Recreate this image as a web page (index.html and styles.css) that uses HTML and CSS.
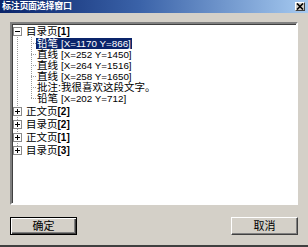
FILE: index.html
```html
<!DOCTYPE html>
<html lang="zh-CN">
<head>
    <meta charset="UTF-8">
    <meta name="viewport" content="width=device-width, initial-scale=1.0">
    <title>标注页面选择窗口</title>
    <link rel="stylesheet" href="styles.css">
</head>
<body>
    <div class="window">
        <div class="titlebar">
            <span class="title">标注页面选择窗口</span>
            <span class="close">
                <svg width="8" height="7" viewBox="0 0 8 7"><path d="M1 0.5 L7 6.5 M7 0.5 L1 6.5" stroke="#000" stroke-width="1.6"/></svg>
            </span>
        </div>

        <div class="panel">
            <div class="tree">
                <div class="node first">
                    <span class="expander minus"></span>
                    <span class="label">目录页<b>[1]</b></span>
                </div>
                <div class="children">
                    <div class="leaf"><span class="label selected">铅笔 <span class="coord">[X=1170 Y=866]</span></span></div>
                    <div class="leaf"><span class="label">直线 <span class="coord">[X=252 Y=1450]</span></span></div>
                    <div class="leaf"><span class="label">直线 <span class="coord">[X=264 Y=1516]</span></span></div>
                    <div class="leaf"><span class="label">直线 <span class="coord">[X=258 Y=1650]</span></span></div>
                    <div class="leaf"><span class="label">批注:我很喜欢这段文字。</span></div>
                    <div class="leaf last"><span class="label">铅笔 <span class="coord">[X=202 Y=712]</span></span></div>
                </div>
                <div class="node">
                    <span class="expander plus"></span>
                    <span class="label">正文页<b>[2]</b></span>
                </div>
                <div class="node">
                    <span class="expander plus"></span>
                    <span class="label">目录页<b>[2]</b></span>
                </div>
                <div class="node">
                    <span class="expander plus"></span>
                    <span class="label">正文页<b>[1]</b></span>
                </div>
                <div class="node">
                    <span class="expander plus"></span>
                    <span class="label">目录页<b>[3]</b></span>
                </div>
            </div>
        </div>

        <div class="buttons">
            <button class="btn default">确定</button>
            <button class="btn">取消</button>
        </div>
    </div>
</body>
</html>
```

FILE: styles.css
```css
html, body {
    margin: 0;
    padding: 0;
}
body {
    background-color: #d4d0c8;
    font-family: "Liberation Sans", "Noto Sans CJK SC", sans-serif;
    font-size: 11px;
    color: #000;
}
.window {
    height: 245px;
    border-bottom: 2px solid #404040;
    box-sizing: content-box;
}
.titlebar {
    height: 13px;
    display: flex;
    align-items: center;
    justify-content: space-between;
    padding: 0 3px 0 2px;
    background: linear-gradient(to right, #0a246a 0%, #3a62a8 45%, #a6caf0 100%);
}
.title {
    color: #fff;
    font-family: "Liberation Sans", "Noto Sans CJK SC", sans-serif;
    font-size: 9px;
    font-weight: bold;
    line-height: 13px;
    letter-spacing: -0.3px;
}
.close {
    width: 10px;
    height: 9px;
    display: flex;
    align-items: center;
    justify-content: center;
    background-color: #d4d0c8;
    border: 1px solid;
    border-color: #fff #404040 #404040 #fff;
    box-sizing: border-box;
}
.panel {
    margin: 9px 10px 0 10px;
    height: 183px;
    background-color: #fff;
    border: 2px solid;
    border-color: #808080 #fff #fff #808080;
    box-sizing: border-box;
    box-shadow: inset 1px 1px 0 #404040;
    padding-top: 1px;
}
.tree {
    background-image: repeating-linear-gradient(to bottom, #9a9a9a 0 1px, transparent 1px 2px);
    background-repeat: no-repeat;
    background-size: 1px calc(100% - 12px);
    background-position: 5px 6px;
}
.node {
    display: flex;
    align-items: center;
    height: 13px;
    padding-left: 1px;
}
.node.first {
    height: 12px;
}
.expander {
    width: 9px;
    height: 9px;
    flex: none;
    box-sizing: border-box;
    border: 1px solid #8a8a8a;
    background-color: #fff;
    margin-right: 4px;
    background-repeat: no-repeat;
    background-image: linear-gradient(#000, #000);
    background-size: 5px 1px;
    background-position: 1px 3px;
}
.expander.plus {
    background-image: linear-gradient(#000, #000), linear-gradient(#000, #000);
    background-size: 5px 1px, 1px 5px;
    background-position: 1px 3px, 3px 1px;
}
.label {
    font-family: "Liberation Sans", "Noto Sans CJK SC", sans-serif;
    font-size: 10.5px;
    line-height: 11px;
    white-space: nowrap;
}
.label b {
    font-size: 10px;
    font-weight: bold;
}
.coord {
    font-size: 9.8px;
}
.children {
    margin-left: 19px;
    padding-top: 1px;
    background-image: repeating-linear-gradient(to bottom, #9a9a9a 0 1px, transparent 1px 2px);
    background-repeat: no-repeat;
    background-size: 1px calc(100% - 6px);
    background-position: 0 0;
}
.leaf {
    display: flex;
    align-items: center;
    height: 11px;
    padding-left: 6px;
    background-image: repeating-linear-gradient(to right, #9a9a9a 0 1px, transparent 1px 2px);
    background-repeat: no-repeat;
    background-size: 5px 1px;
    background-position: 0 5px;
}
.leaf.last {
    margin-bottom: 1px;
}
.label.selected {
    background-color: #0a246a;
    color: #fff;
    padding: 0 1px;
    margin-left: -1px;
}
.buttons {
    display: flex;
    justify-content: space-between;
    padding: 12px 10px 0 10px;
}
.btn {
    width: 67px;
    height: 18px;
    padding: 0;
    margin: 0;
    background-color: #d4d0c8;
    font-family: "Liberation Sans", "Noto Sans CJK SC", sans-serif;
    font-size: 11px;
    line-height: 14px;
    color: #000;
    border: 1px solid;
    border-color: #fff #404040 #404040 #fff;
    box-shadow: inset -1px -1px 0 #808080;
}
.btn.default {
    border: 1px solid #000;
    box-shadow: inset 1px 1px 0 #fff, inset -1px -1px 0 #404040, inset -2px -2px 0 #808080;
}
```
